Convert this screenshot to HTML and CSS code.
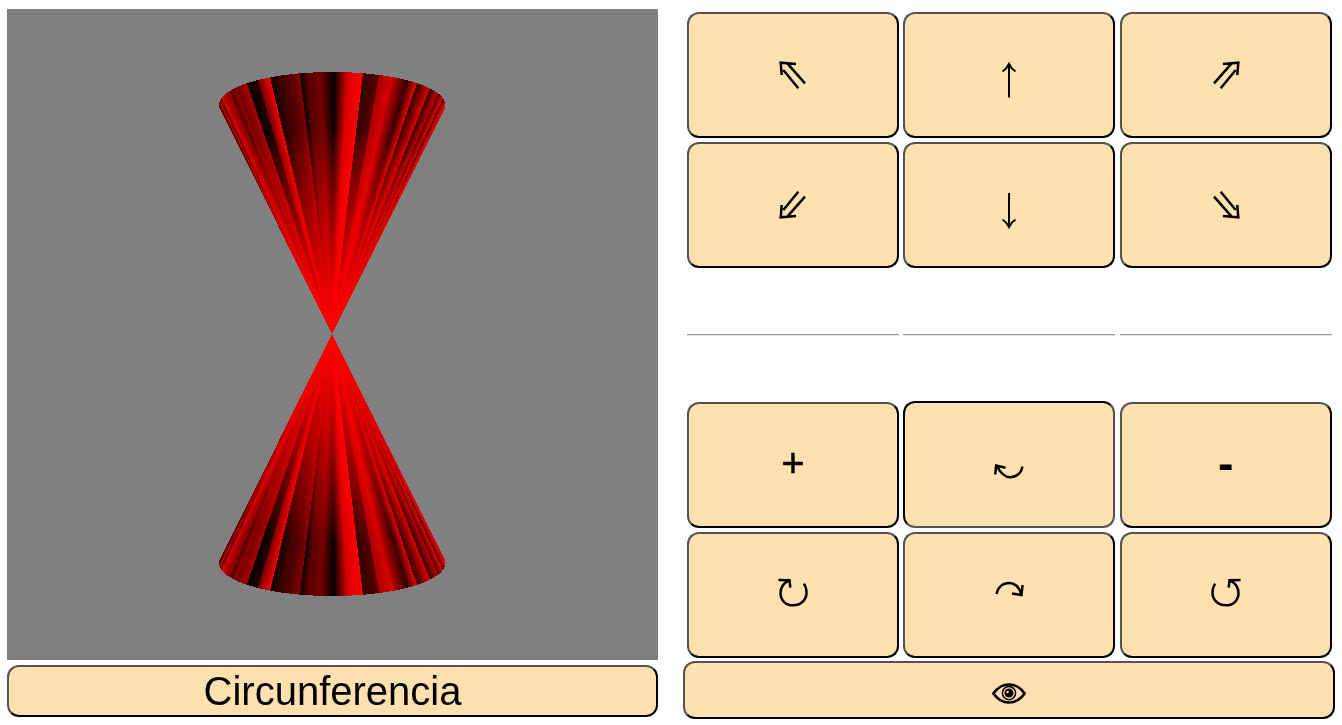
FILE: index.html
```html
<!DOCTYPE html>
<html lang="es">
<head>
<meta charset="utf-8">
<title>Circunferencia</title>
<link rel="stylesheet" href="styles.css">
</head>
<body>
<svg class="defs" aria-hidden="true">
  <symbol id="i-diag" viewBox="0 0 48 48">
    <path d="M27 13 11.700 11.700 12.700 24M18.300 12.300 36 32.300M14.300 19 29.300 37.300"/>
  </symbol>
  <symbol id="i-up" viewBox="0 0 48 48">
    <path d="M24 13V46.500M17.500 20.500Q21.500 18 24 13Q26.500 18 30.500 20.500"/>
  </symbol>
  <symbol id="i-down" viewBox="0 0 48 48">
    <path d="M24 12V46M17.500 38.500Q21.500 41 24 46Q26.500 41 30.500 38.500"/>
  </symbol>
  <symbol id="i-turn" viewBox="0 0 48 48">
    <path d="M9.400 9 20.500 9.200 21.300 16.700M34.700 12.700C36.700 15 37.500 18.500 37.500 22 37.500 29 31.500 34.300 24 34.300 16.500 34.300 11.500 29 11.500 22 11.500 17 14.500 12 20.200 9.300"/>
  </symbol>
  <symbol id="i-over" viewBox="0 0 48 48">
    <path d="M11.500 23C13 16 18 12 24 12 30 12 34 16 36 22.500M27 22.500 36.500 24 37.500 14"/>
  </symbol>
  <symbol id="i-under" viewBox="0 0 48 48">
    <path d="M37.200 25.500C37 32 31 36.200 25 36.200 20 36.200 15 31 11.800 25M20.500 26.800 11.200 24.500 10.200 33.500"/>
  </symbol>
</svg>
<main class="page">
  <section class="viewer">
    <canvas id="scene" class="scene" width="651" height="651"></canvas>
    <button class="btn label">Circunferencia</button>
  </section>
  <section class="controls">
    <div class="pad">
      <button class="btn key" aria-label="⇖"><svg class="icon"><use href="#i-diag"/></svg></button>
      <button class="btn key" aria-label="↑"><svg class="icon thin"><use href="#i-up"/></svg></button>
      <button class="btn key" aria-label="⇗"><svg class="icon flip-x"><use href="#i-diag"/></svg></button>
      <button class="btn key" aria-label="⇙"><svg class="icon flip-y"><use href="#i-diag"/></svg></button>
      <button class="btn key" aria-label="↓"><svg class="icon thin"><use href="#i-down"/></svg></button>
      <button class="btn key" aria-label="⇘"><svg class="icon flip-xy"><use href="#i-diag"/></svg></button>
      <div class="slot"><span class="rule"></span></div>
      <div class="slot"><span class="rule"></span></div>
      <div class="slot"><span class="rule"></span></div>
      <button class="btn key plus">+</button>
      <button class="btn key pressed" aria-label="⤿"><svg class="icon"><use href="#i-under"/></svg></button>
      <button class="btn key minus">-</button>
      <button class="btn key" aria-label="↻"><svg class="icon"><use href="#i-turn"/></svg></button>
      <button class="btn key" aria-label="↷"><svg class="icon"><use href="#i-over"/></svg></button>
      <button class="btn key" aria-label="↺"><svg class="icon flip-x"><use href="#i-turn"/></svg></button>
    </div>
    <button class="btn wide" aria-label="Ver">
      <svg class="eye" viewBox="0 0 36 22" width="34" height="21" aria-hidden="true">
        <path class="eye-lid" d="M1.500 11C6 4.500 11.500 1.500 18 1.500S30 4.500 34.500 11C30 17.500 24.500 20.500 18 20.500S6 17.500 1.500 11Z"/>
        <circle class="eye-ring" cx="18" cy="10.500" r="7"/>
        <circle class="eye-pupil" cx="18" cy="10.500" r="4.800"/>
        <circle class="eye-glint" cx="16.500" cy="9.300" r="1.300"/>
      </svg>
    </button>
  </section>
</main>
<script src="scene.js"></script>
</body>
</html>
```
FILE: styles.css
```css
* { box-sizing: border-box; }
html, body { margin: 0; background: #fff; }
body { font-family: "Liberation Sans", Arial, sans-serif; overflow: hidden; }
.defs { display: none; }
.page { display: flex; align-items: flex-start; width: 1342px; height: 725px; }
.viewer { display: flex; flex-direction: column; gap: 5px; width: 651px; margin: 9px 0 0 7px; }
.scene { display: block; width: 651px; height: 651px; }
.btn {
  display: flex; align-items: center; justify-content: center;
  padding: 0; margin: 0; color: #000;
  background: #ffe1af;
  border: 2px outset #000;
  border-radius: 12px;
  font-family: "Liberation Sans", "DejaVu Sans", sans-serif;
}
.label { height: 52px; font-size: 40px; }
.controls { width: 652px; margin-left: 25px; padding-top: 12px; display: flex; flex-direction: column; gap: 3px; }
.pad { display: grid; grid-template-columns: repeat(3, 212px); grid-auto-rows: 126px; column-gap: 4.4px; row-gap: 4px; padding: 0 3px 0 4px; }
.key { line-height: 1; }
.plus { font-size: 40px; padding-bottom: 4px; -webkit-text-stroke: 0.5px #000; }
.minus { font-size: 46px; font-weight: bold; padding-bottom: 4px; }
.pressed { border-style: inset; margin-top: -1px; }
.slot { display: flex; align-items: center; }
.rule { display: block; width: 100%; height: 2px; border-top: 1px solid #999; border-bottom: 1px solid #e4e4e4; }
.wide { width: 652px; height: 58px; padding-top: 7px; }
.icon { display: block; width: 48px; height: 48px; fill: none; stroke: #000; stroke-width: 2.5; }
.thin { stroke-width: 2; }
.flip-x { transform: scaleX(-1); }
.flip-y { transform: scaleY(-1); }
.flip-xy { transform: scale(-1, -1); }
.eye { display: block; }
.eye-lid { fill: none; stroke: #000; stroke-width: 2.800; }
.eye-ring { fill: none; stroke: #000; stroke-width: 1.600; }
.eye-pupil { fill: #000; }
.eye-glint { fill: #ffe1af; }
```
FILE: scene.js
```js
(function () {
  var canvas = document.getElementById('scene');
  var ctx = canvas.getContext('2d');
  var W = canvas.width, H = canvas.height;
  var img = ctx.createImageData(W, H);
  var ax = 325.2, ay = 325, height = 229, rx = 113.2, ry = 33;
  // [rim x start, rim x end, brightness start, brightness end], page x coordinates on the rim
  var bands = [
    [218, 218.8, 0.2, 0.9], [218.8, 220, 0.25, 0.9], [220, 223, 0.3, 0.95], [223, 230, 0.75, 0.5],
    [230, 236, 0.3, 0.6], [236, 247, 0.45, 0.65], [247, 258, 0.02, 0.15], [258, 270, 0.45, 0.95],
    [270, 284, 0.08, 0.3], [284, 300, 0.25, 0.5], [300, 306, 0.02, 0.3], [306, 320, 0.32, 0.45],
    [320, 334, 0.45, 0.02], [334, 348, 0.02, 0.85], [348, 363, 0.85, 1.0], [363, 379, 0.18, 0.35], [379, 393, 0.65, 0.85],
    [393, 408, 0.75, 0.2], [408, 417, 0.25, 0.9], [417, 430, 0.2, 0.85], [430, 438, 0.2, 0.75],
    [438, 443, 0.3, 0.9], [443, 445.5, 0.25, 0.9], [445.5, 447, 0.3, 0.95]
  ];
  function rimBrightness(x) {
    for (var i = 0; i < bands.length; i++) {
      var b = bands[i];
      if (x < b[1]) return b[2] + (b[3] - b[2]) * Math.max(0, (x - b[0]) / (b[1] - b[0]));
    }
    return 0.9;
  }
  for (var y = 0; y < H; y++) {
    for (var x = 0; x < W; x++) {
      var dx = x + 0.5 - ax, dy = Math.abs(y + 0.5 - ay);
      var r = 128, g = 128, bl = 128;
      if (dy > 0 && dy <= height + ry) {
        // Far intersection of the ray from the apex with the rim ellipse.
        var A = dx * dx / (rx * rx) + dy * dy / (ry * ry);
        var B = -2 * dy * height / (ry * ry);
        var C = height * height / (ry * ry) - 1;
        var D = B * B - 4 * A * C;
        if (D >= 0) {
          var s = (-B + Math.sqrt(D)) / (2 * A);
          if (s >= 1) {
            var rim = rimBrightness(s * dx + ax + 7);
            var t = Math.min(1, 1.25 / s);
            var v = 1 - (1 - rim) * Math.pow(t, 1.3);
            r = Math.round(255 * v); g = 0; bl = 0;
          }
        }
      }
      var p = (y * W + x) * 4;
      img.data[p] = r; img.data[p + 1] = g; img.data[p + 2] = bl; img.data[p + 3] = 255;
    }
  }
  ctx.putImageData(img, 0, 0);
})();
```
